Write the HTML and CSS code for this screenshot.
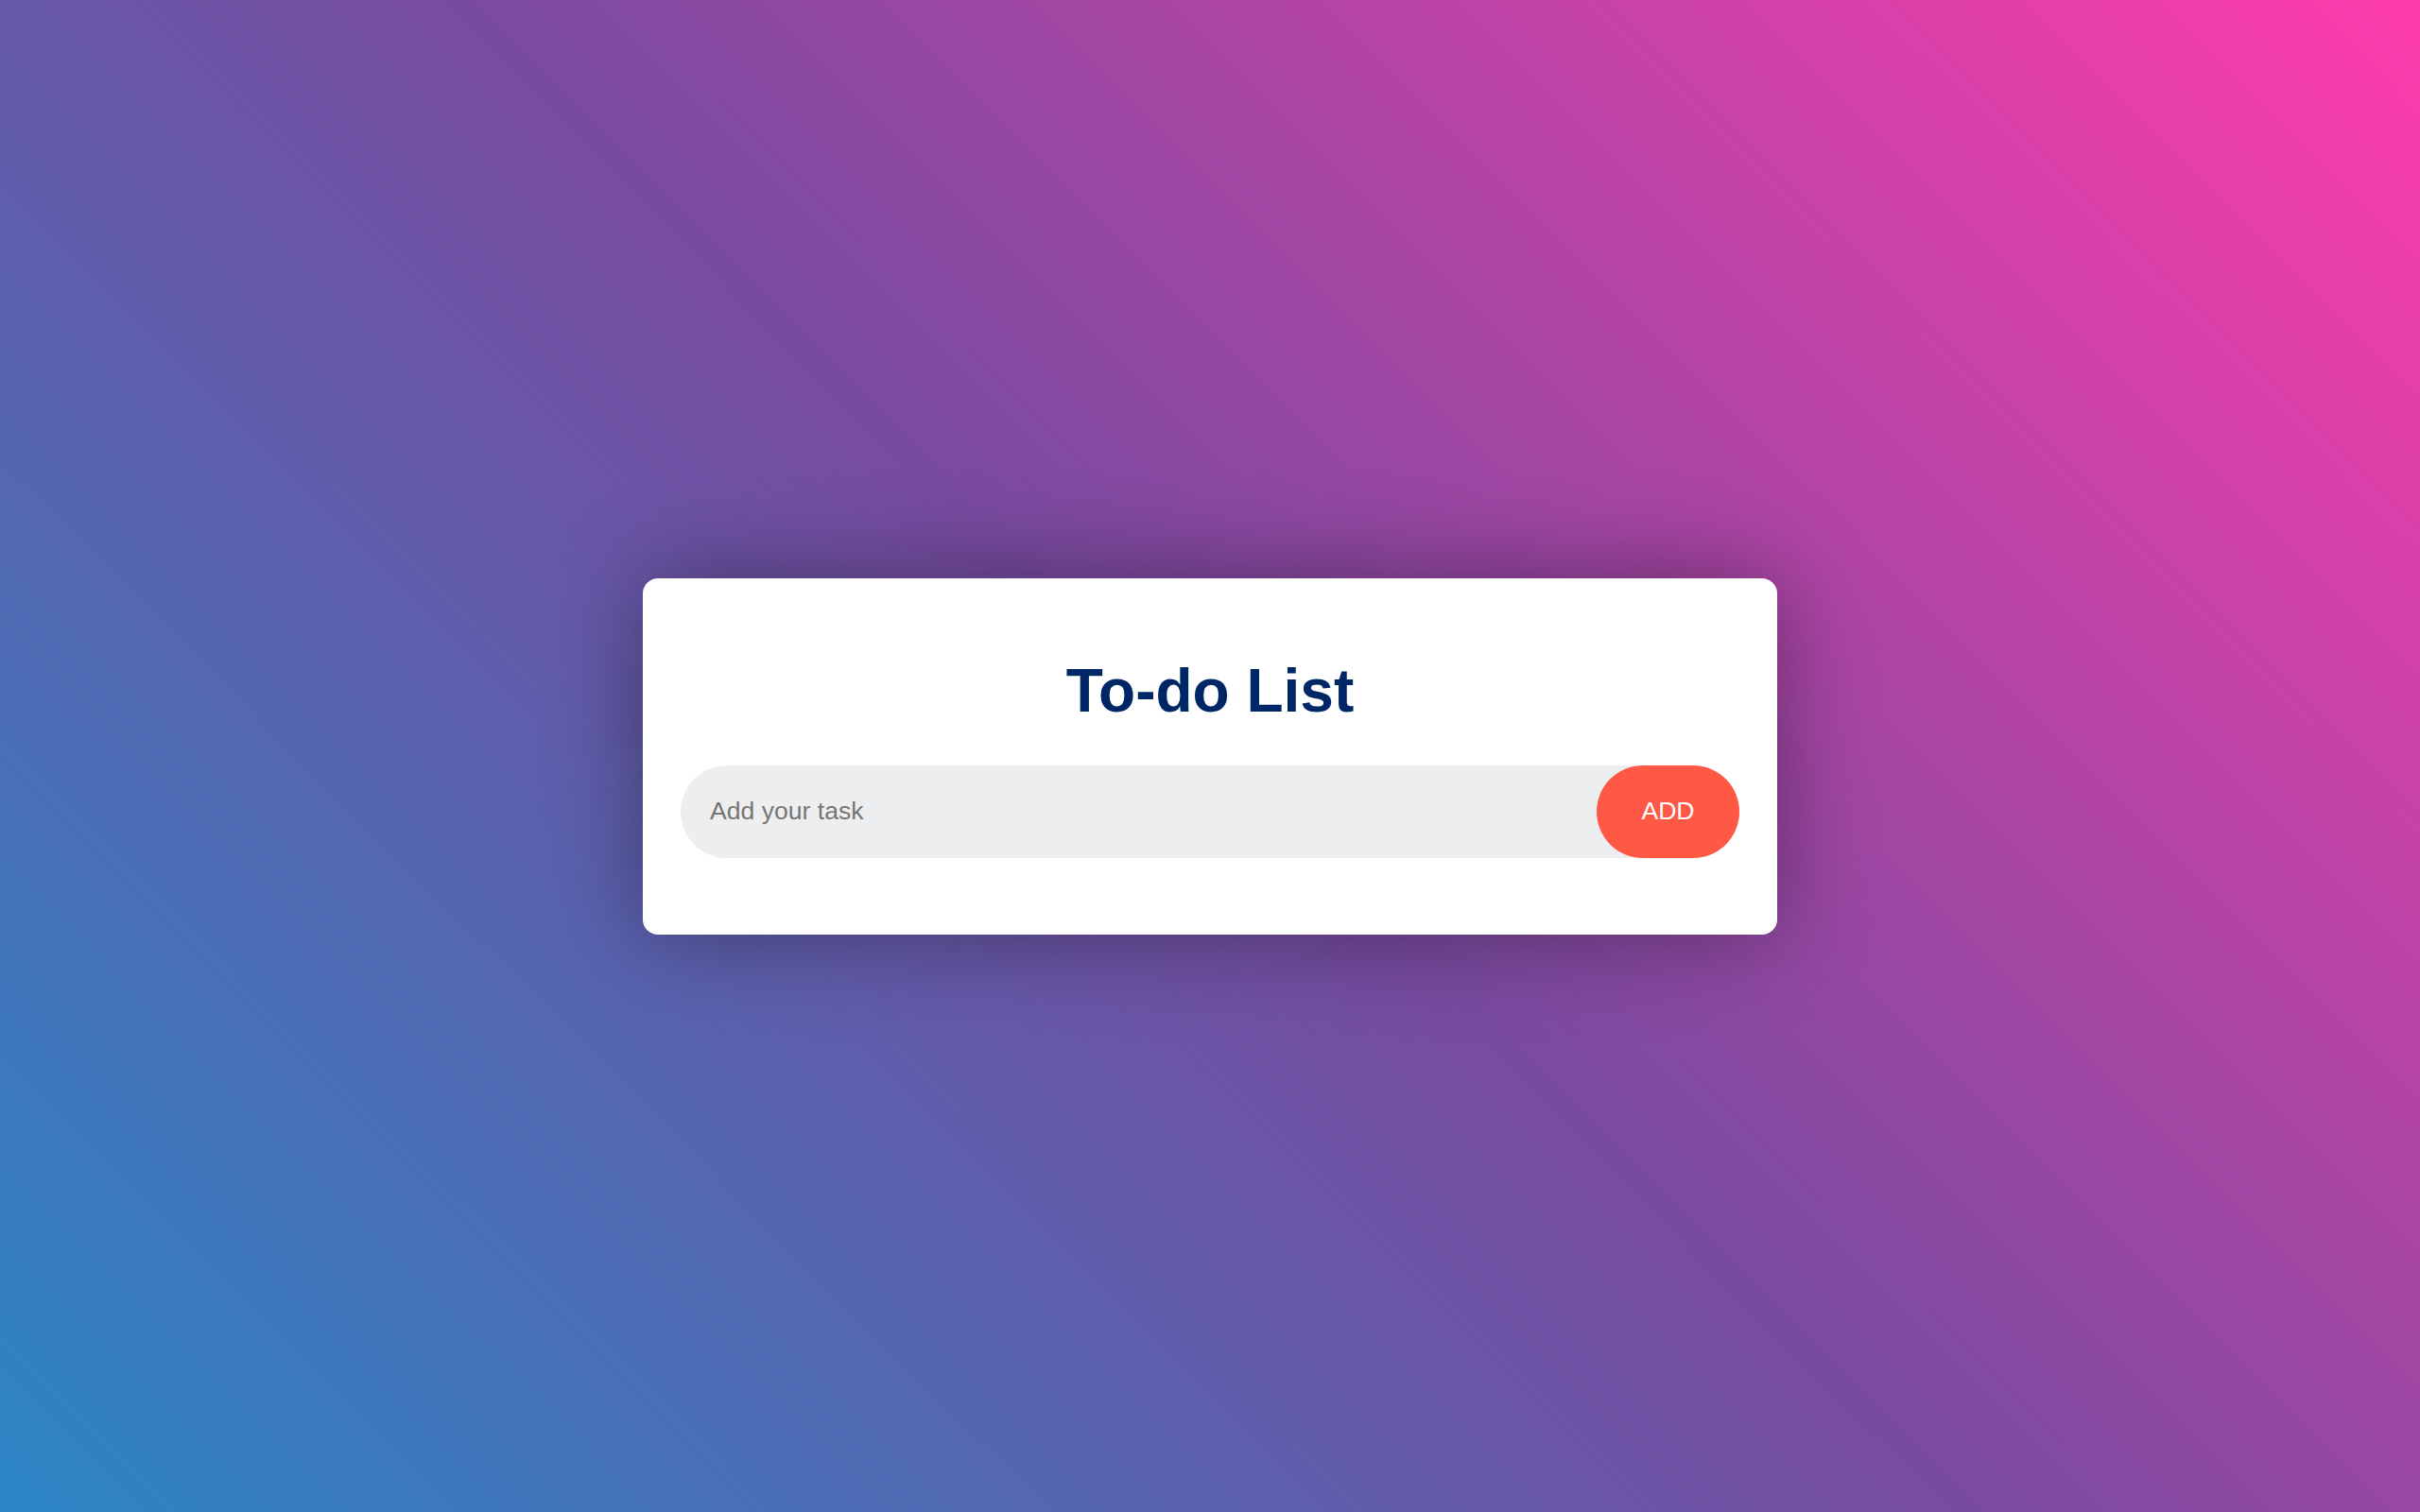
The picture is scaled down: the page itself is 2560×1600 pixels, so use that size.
FILE: index.html
```html
<!DOCTYPE html>
<html lang="en">
<head>
<meta charset="utf-8">
<title>To-do List</title>
<link rel="stylesheet" href="styles.css">
</head>
<body>
<div class="page">
  <div class="todo-app">
    <h1 class="title">To-do List</h1>
    <div class="row">
      <input class="task-input" type="text" placeholder="Add your task">
      <button class="add-btn">ADD</button>
    </div>
  </div>
</div>
</body>
</html>
```
FILE: styles.css
```css
* { box-sizing: border-box; }
html, body { margin: 0; padding: 0; }
body {
  font-family: "Liberation Sans", Arial, sans-serif;
  background-image: linear-gradient(225deg, #ff3cac 0%, #784ba0 50%, #2b86c5 100%);
  min-height: 100vh;
}
.page {
  min-height: 100vh;
  display: flex;
  align-items: center;
  justify-content: center;
}
.todo-app {
  width: 1200px;
  background: #fff;
  border-radius: 16px;
  padding: 82px 40px 81px;
  box-shadow: 0 0 100px rgba(0, 0, 0, 0.38);
}
.title {
  margin: 0 0 42px;
  text-align: center;
  color: #002765;
  font-size: 64px;
  font-weight: 700;
  line-height: normal;
}
.row {
  display: flex;
  align-items: center;
  background: #edeef0;
  border-radius: 49px;
  padding-left: 31px;
  height: 98px;
}
.task-input {
  flex: 1;
  border: none;
  outline: none;
  background: transparent;
  font-family: "Liberation Sans", Arial, sans-serif;
  font-size: 26.6px;
  padding: 0;
  color: #333;
}
.task-input::placeholder { color: #757575; }
.add-btn {
  border: none;
  outline: none;
  height: 98px;
  width: 151px;
  padding: 0;
  background: #ff5945;
  color: #fff;
  font-family: "Liberation Sans", Arial, sans-serif;
  font-size: 26.6px;
  border-radius: 49px;
  cursor: pointer;
}
```
